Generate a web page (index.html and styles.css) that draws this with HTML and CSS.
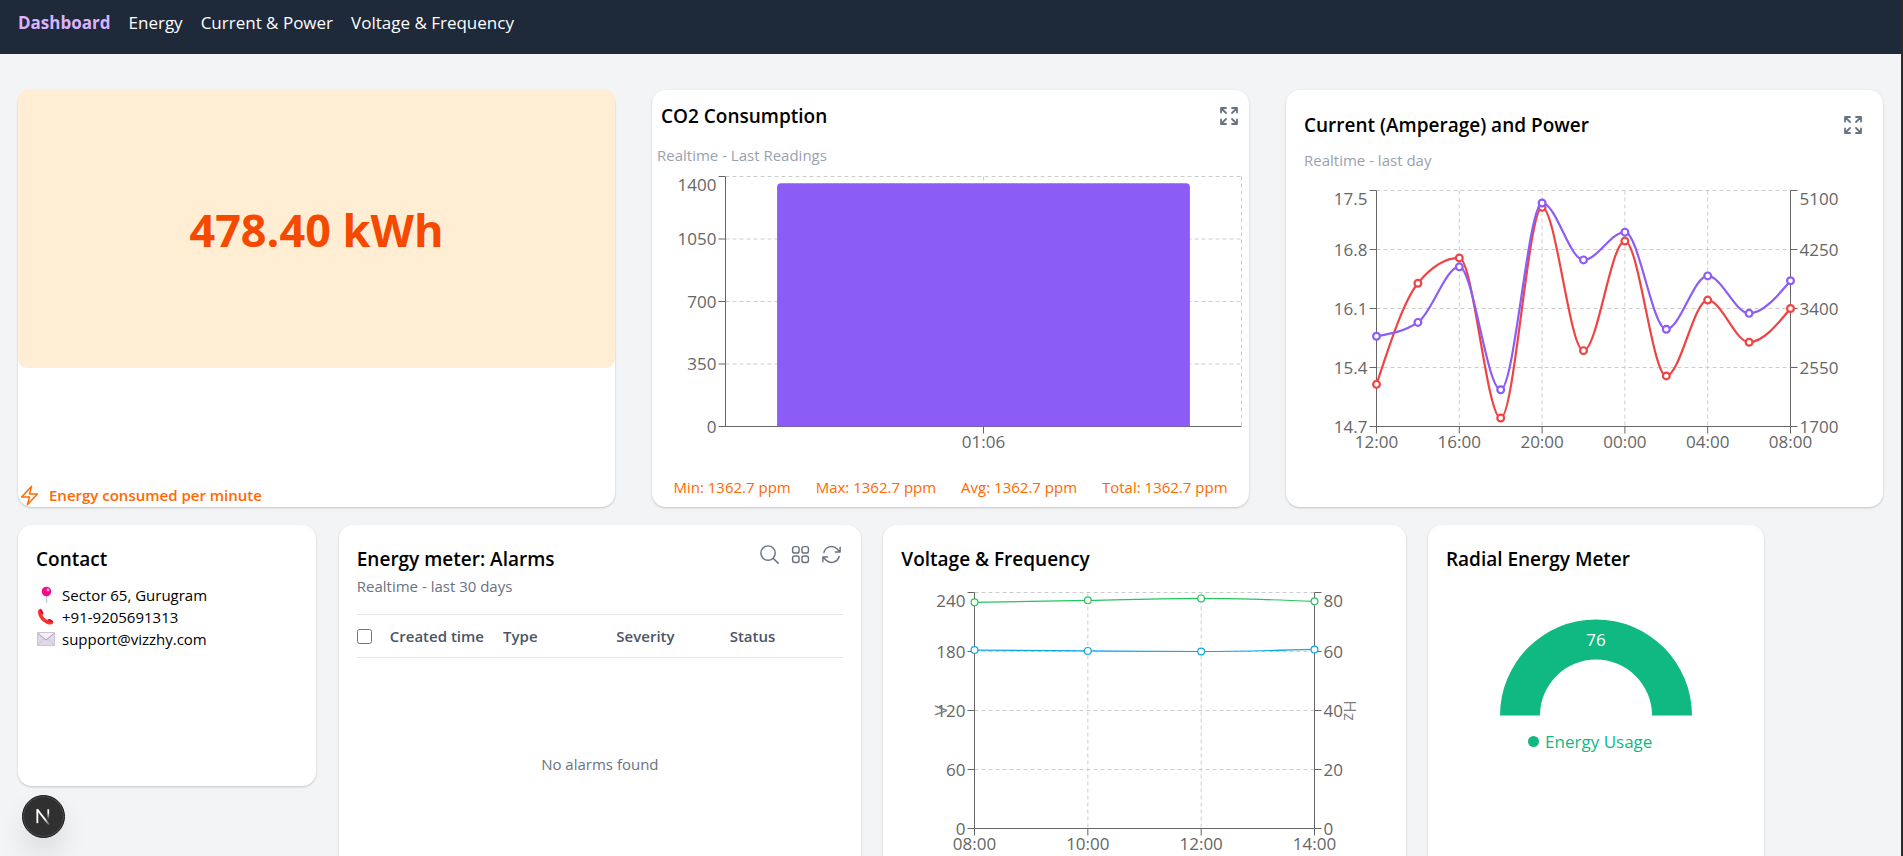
FILE: index.html
```html
<!DOCTYPE html>
<html lang="en">
<head>
<meta charset="utf-8">
<meta name="viewport" content="width=device-width, initial-scale=1">
<title>Energy Dashboard</title>
<link rel="stylesheet" href="styles.css">
</head>
<body>
<nav class="nav" aria-label="Main">
  <a class="nav-link active" href="#dashboard">Dashboard</a>
  <a class="nav-link" href="#energy">Energy</a>
  <a class="nav-link" href="#current-power">Current &amp; Power</a>
  <a class="nav-link" href="#voltage-frequency">Voltage &amp; Frequency</a>
</nav>

<main class="dashboard">
  <div class="row-top">
    <section class="card energy">
      <div class="energy-value">478.40 kWh</div>
      <div class="energy-note">
        <svg class="icon" viewBox="0 0 24 24" aria-hidden="true"><path d="M3.75 13.5l10.5-11.25L12 10.5h8.25L9.75 21.75 12 13.5H3.75z"/></svg>
        <span>Energy consumed per minute</span>
      </div>
    </section>

    <section class="card co2">
      <header class="card-head">
        <h2 class="title">CO2 Consumption</h2>
        <button class="icon-button" type="button" aria-label="Expand CO2 chart">
          <svg class="icon-expand" viewBox="0 0 18 18" aria-hidden="true"><path d="M1 5.500V1h5M1.500 1.500l4.500 4.500M12 1h5v4.500M16.500 1.500L12 6M1 12.500V17h5M1.500 16.500L6 12M17 12.500V17h-5M16.500 16.500L12 12"/></svg>
        </button>
      </header>
      <p class="subtitle">Realtime - Last Readings</p>
      <svg class="chart" id="co2-chart" role="img" aria-label="CO2 consumption bar chart"></svg>
      <div class="stats">
        <span>Min: 1362.7 ppm</span>
        <span>Max: 1362.7 ppm</span>
        <span>Avg: 1362.7 ppm</span>
        <span>Total: 1362.7 ppm</span>
      </div>
    </section>

    <section class="card current">
      <header class="card-head">
        <h2 class="title">Current (Amperage) and Power</h2>
        <button class="icon-button" type="button" aria-label="Expand current and power chart">
          <svg class="icon-expand" viewBox="0 0 18 18" aria-hidden="true"><path d="M1 5.500V1h5M1.500 1.500l4.500 4.500M12 1h5v4.500M16.500 1.500L12 6M1 12.500V17h5M1.500 16.500L6 12M17 12.500V17h-5M16.500 16.500L12 12"/></svg>
        </button>
      </header>
      <p class="subtitle">Realtime - last day</p>
      <svg class="chart" id="current-chart" role="img" aria-label="Current and power line chart"></svg>
    </section>
  </div>

  <div class="row-bottom">
    <section class="card contact">
      <h2 class="title">Contact</h2>
      <ul class="contact-list">
        <li>
          <svg class="emoji" viewBox="0 0 20 20" aria-hidden="true"><path d="M10.500 10v8" stroke="#c9c5cc" stroke-width="1.4"/><circle cx="10.500" cy="6.500" r="4.800" fill="#f70a8d"/><circle cx="12" cy="5" r="1.400" fill="#ffb4dc"/></svg>
          <span>Sector 65, Gurugram</span>
        </li>
        <li>
          <svg class="emoji" viewBox="0 0 20 20" aria-hidden="true"><path d="M3 2.500C4 1.500 5 1.500 5.600 2.500L7.300 5.500C7.700 6.400 7.200 7 6.400 7.700C7.200 10 9 11.900 11.500 13C12.400 12 13 11.600 13.900 12.100L16.800 14C17.800 14.800 17.600 16 16.500 16.800C15 18 12.500 17.800 9.500 16C5 13.300 2 9 2 5C2 4 2.300 3.100 3 2.500z" fill="#f8312f"/><path d="M4.600 1.800L7.300 5.500L6.400 7.700L4.300 4.200zM11.500 13l2.400-.9 3.300 2.500-1.200 1z" fill="#ca0b4a"/></svg>
          <span>+91-9205691313</span>
        </li>
        <li>
          <svg class="emoji" viewBox="0 0 20 20" aria-hidden="true"><path d="M1.500 3.500h17v13h-17z" fill="#e1d8ec"/><path d="M1.500 16.500l6.500-7M18.500 16.500l-6.500-7" stroke="#cdc4d6" stroke-width="1" fill="none"/><path d="M1.500 3.500L10 11l8.500-7.500z" fill="#f3eef8"/><path d="M1.500 4L10 11l8.500-7" stroke="#998ea4" stroke-width=".8" fill="none"/><path d="M1.500 3.500h17v13h-17z" stroke="#c3bacb" stroke-width=".8" fill="none"/></svg>
          <span>support@vizzhy.com</span>
        </li>
      </ul>
    </section>

    <section class="card alarms">
      <header class="alarms-head">
        <div>
          <h2 class="title">Energy meter: Alarms</h2>
          <p class="alarms-sub">Realtime - last 30 days</p>
        </div>
        <div class="tools">
          <button class="icon-button" type="button" aria-label="Search"><svg class="icon" viewBox="0 0 24 24" aria-hidden="true"><path d="m21 21-5.197-5.197m0 0A7.500 7.500 0 1 0 5.196 5.196a7.500 7.500 0 0 0 10.607 10.607Z"/></svg></button>
          <button class="icon-button" type="button" aria-label="Grid view"><svg class="icon" viewBox="0 0 24 24" aria-hidden="true"><rect x="3.750" y="3.750" width="6.750" height="6.750" rx="2.250"/><rect x="13.500" y="3.750" width="6.750" height="6.750" rx="2.250"/><rect x="3.750" y="13.500" width="6.750" height="6.750" rx="2.250"/><rect x="13.500" y="13.500" width="6.750" height="6.750" rx="2.250"/></svg></button>
          <button class="icon-button" type="button" aria-label="Refresh"><svg class="icon" viewBox="0 0 24 24" aria-hidden="true"><path d="M16.023 9.348h4.992v-.001M2.985 19.644v-4.992m0 0h4.992m-4.993 0 3.181 3.183a8.250 8.250 0 0 0 13.803-3.700M4.031 9.865a8.250 8.250 0 0 1 13.803-3.700l3.181 3.182m0-4.991v4.990"/></svg></button>
        </div>
      </header>
      <table class="alarm-table">
        <thead>
          <tr>
            <th class="check-cell"><input class="check" type="checkbox" aria-label="Select all alarms"></th>
            <th>Created time</th>
            <th>Type</th>
            <th>Severity</th>
            <th>Status</th>
          </tr>
        </thead>
        <tbody>
          <tr><td class="empty" colspan="5">No alarms found</td></tr>
        </tbody>
      </table>
    </section>

    <section class="card voltage">
      <h2 class="title">Voltage &amp; Frequency</h2>
      <svg class="chart" id="voltage-chart" role="img" aria-label="Voltage and frequency line chart"></svg>
    </section>

    <section class="card radial">
      <h2 class="title">Radial Energy Meter</h2>
      <svg class="gauge" viewBox="0 0 194 97" role="img" aria-label="Energy usage 76">
        <path d="M1 96.500A96 96 0 0 1 193 96.500H153A56 56 0 0 0 41 96.500z" fill="#10b981"/>
        <text class="gauge-value" x="97" y="27">76</text>
      </svg>
      <p class="legend"><span class="legend-dot"></span>Energy Usage</p>
    </section>
  </div>
</main>

<button class="dev-button" type="button" aria-label="Open developer tools">
  <svg class="dev-logo" viewBox="0 0 40 40" aria-hidden="true">
    <defs>
      <linearGradient id="fade-stem" x1="0" y1="0" x2="0" y2="1"><stop offset=".3" stop-color="#fff"/><stop offset="1" stop-color="#fff" stop-opacity="0"/></linearGradient>
      <linearGradient id="fade-diagonal" gradientUnits="userSpaceOnUse" x1="14" y1="14" x2="26" y2="29"><stop offset=".6" stop-color="#fff"/><stop offset="1" stop-color="#fff" stop-opacity="0"/></linearGradient>
    </defs>
    <path d="M14 26.500V13" stroke="#fff" stroke-width="1.800"/>
    <path d="M13.800 13L25.500 28" stroke="url(#fade-diagonal)" stroke-width="1.800"/>
    <rect x="23.800" y="13" width="1.700" height="10" fill="url(#fade-stem)"/>
  </svg>
</button>
<script src="charts.js"></script>
</body>
</html>
```

FILE: styles.css
```css
* {
  box-sizing: border-box;
}

html {
  background: #f3f4f6;
}

body {
  margin: 0;
  min-height: 100vh;
  border-right: 2px solid #2b2b2b;
  background: #f3f4f6;
  color: #000;
  font-family: "Open Sans", "Noto Sans", sans-serif;
  font-size: 17px;
  line-height: 27px;
}

h2,
p,
ul {
  margin: 0;
}

.nav {
  display: flex;
  gap: 18px;
  padding: 9px 18px 18px;
  background: #1e2939;
}

.nav-link {
  color: #fff;
  text-decoration: none;
}

.nav-link.active {
  color: #dab2ff;
  font-weight: 700;
}

.dashboard {
  padding: 36px 18px;
}

.row-top {
  display: grid;
  grid-template-columns: repeat(3, minmax(0, 1fr));
  gap: 37px;
}

.row-bottom {
  display: grid;
  grid-template-columns: 16% 28% 28% 18%;
  column-gap: 1.2%;
  align-items: start;
  margin-top: 18px;
}

.card {
  border-radius: 14px;
  background: #fff;
  box-shadow: 0 1px 3px rgba(0, 0, 0, 0.1), 0 1px 2px rgba(0, 0, 0, 0.1);
}

.title {
  font-size: 19px;
  font-weight: 600;
  line-height: 32px;
}

.icon,
.icon-expand {
  display: block;
  fill: none;
  stroke: currentColor;
  stroke-width: 1.5;
  stroke-linecap: round;
  stroke-linejoin: round;
}

.icon {
  width: 23px;
  height: 23px;
}

.icon-expand {
  width: 18px;
  height: 18px;
  stroke-width: 1.8;
}

.icon-button {
  padding: 0;
  border: 0;
  background: none;
  color: #6a7282;
  cursor: pointer;
}

.card-head {
  display: flex;
  align-items: center;
  justify-content: space-between;
}

.subtitle {
  color: #99a1af;
  font-size: 15px;
  line-height: 22px;
}

.chart {
  display: block;
  width: 100%;
}

/* Energy total */

.energy {
  display: flex;
  flex-direction: column;
  justify-content: space-between;
}

.energy-value {
  display: flex;
  align-items: center;
  justify-content: center;
  height: 278px;
  border-radius: 9px;
  background: #ffedd4;
  color: #f54900;
  font-size: 45px;
  font-weight: 700;
}

.energy-note {
  display: flex;
  align-items: center;
  gap: 8px;
  height: 23px;
  color: #ff6900;
  font-size: 15px;
  font-weight: 600;
}

/* CO2 */

.co2 .card-head {
  padding: 10px 11px 8px 9px;
}

.co2 .subtitle {
  padding: 4px 5px 5px;
}

.co2 .chart {
  height: 303px;
}

.stats {
  display: flex;
  justify-content: space-around;
  padding: 0 9px 6px;
  color: #ff6900;
  font-size: 15px;
}

/* Current and power */

.current {
  padding: 18px;
}

.current .card-head {
  padding: 1px 3px 0 0;
}

.current .subtitle {
  padding-top: 8px;
}

.current .chart {
  height: 290px;
  margin-top: 14px;
}

/* Contact */

.contact {
  min-height: 261px;
  padding: 18px;
}

.contact-list {
  padding: 9px 0 0;
  list-style: none;
  font-size: 15px;
  line-height: 22px;
}

.contact-list li {
  display: flex;
  align-items: center;
  gap: 6px;
}

.emoji {
  width: 20px;
  height: 20px;
}

/* Alarms */

.alarms,
.voltage,
.radial {
  min-height: 380px;
  padding: 18px;
}

.alarms-head {
  display: flex;
  justify-content: space-between;
  padding-bottom: 17px;
}

.alarms-sub {
  color: #6a7282;
  font-size: 15px;
  line-height: 22px;
}

.tools {
  display: flex;
  align-items: flex-start;
  gap: 8px;
}

.alarm-table {
  width: 100%;
  border-collapse: collapse;
  table-layout: fixed;
  font-size: 15px;
}

.alarm-table th {
  height: 43px;
  padding: 0;
  border-top: 1px solid #e5e7eb;
  border-bottom: 1px solid #e5e7eb;
  color: #4a5565;
  font-weight: 600;
  text-align: left;
}

.alarm-table .check-cell {
  width: 33px;
}

.check {
  display: block;
  width: 15px;
  height: 15px;
  margin: 0;
}

.empty {
  height: 214px;
  padding: 0;
  color: #6a7282;
  text-align: center;
}

/* Voltage and frequency */

.voltage .chart {
  height: 300px;
  margin-top: 8px;
}

/* Radial meter */

.radial {
  display: flex;
  flex-direction: column;
}

.gauge {
  align-self: center;
  width: 194px;
  margin-top: 44px;
}

.gauge-value {
  fill: #fff;
  font-size: 17px;
  text-anchor: middle;
}

.legend {
  display: flex;
  align-items: center;
  justify-content: center;
  gap: 6px;
  margin-top: 12px;
  padding-right: 11px;
  color: #10b981;
}

.legend-dot {
  width: 11px;
  height: 11px;
  border-radius: 50%;
  background: #10b981;
}

/* Chart parts */

.grid-line {
  stroke: #ccc;
  stroke-dasharray: 4 3;
}

.axis-line {
  stroke: #666;
}

.tick-label {
  fill: #666;
  font-size: 17px;
}

.axis-title {
  fill: #808080;
  font-size: 17px;
}

/* Floating button */

.dev-button {
  position: fixed;
  bottom: 18px;
  left: 22px;
  width: 43px;
  height: 43px;
  padding: 0;
  border: 1px solid #171717;
  border-radius: 50%;
  background: #303030;
  box-shadow: inset 0 0 0 1px #4d4d4d, 0 16px 32px -8px rgba(0, 0, 0, 0.24);
}

.dev-logo {
  display: block;
  width: 41px;
  height: 41px;
  fill: none;
}
```

FILE: charts.js
```js
(function () {
  var NS = "http://www.w3.org/2000/svg";

  function add(svg, name, attrs, text) {
    var node = document.createElementNS(NS, name);
    Object.keys(attrs).forEach(function (key) {
      node.setAttribute(key, attrs[key]);
    });
    if (text !== undefined) node.textContent = text;
    svg.appendChild(node);
    return node;
  }

  function line(svg, cls, x1, y1, x2, y2) {
    add(svg, "line", { class: cls, x1: x1, y1: y1, x2: x2, y2: y2 });
  }

  // Monotone cubic interpolation through evenly spaced points.
  function monotonePath(pts) {
    var n = pts.length;
    var h = pts[1][0] - pts[0][0];
    var s = [];
    var t = [];
    var i;
    for (i = 0; i < n - 1; i++) s.push((pts[i + 1][1] - pts[i][1]) / h);
    for (i = 1; i < n - 1; i++) {
      var a = s[i - 1];
      var b = s[i];
      t[i] = (Math.sign(a) + Math.sign(b)) *
        Math.min(Math.abs(a), Math.abs(b), Math.abs(a + b) / 4);
    }
    t[0] = (3 * s[0] - t[1]) / 2;
    t[n - 1] = (3 * s[n - 2] - t[n - 2]) / 2;
    var d = "M" + pts[0].join(",");
    for (i = 0; i < n - 1; i++) {
      d += "C" + [
        pts[i][0] + h / 3, pts[i][1] + t[i] * h / 3,
        pts[i + 1][0] - h / 3, pts[i + 1][1] - t[i + 1] * h / 3,
        pts[i + 1][0], pts[i + 1][1]
      ].join(",");
    }
    return d;
  }

  function draw(id, cfg) {
    var svg = document.getElementById(id);
    var width = Math.round(svg.getBoundingClientRect().width);
    var left = cfg.left + 0.5;
    var right = width - cfg.right + 0.5;
    var top = cfg.top + 0.5;
    var bottom = top + cfg.height;
    svg.textContent = "";

    cfg.leftTicks.forEach(function (label, i) {
      var y = bottom - cfg.height * i / (cfg.leftTicks.length - 1);
      var textY = Math.max(y, top + cfg.topShift) + 6;
      line(svg, "grid-line", left, y, right, y);
      line(svg, "axis-line", left - 7, y, left, y);
      add(svg, "text", { class: "tick-label", x: left - 9, y: textY, "text-anchor": "end" }, label);
      if (cfg.rightTicks) {
        line(svg, "axis-line", right, y, right + 7, y);
        add(svg, "text", { class: "tick-label", x: right + 9, y: textY }, cfg.rightTicks[i]);
      }
    });

    cfg.xTicks.forEach(function (label, i) {
      var x = cfg.bar ? (left + right) / 2 : left + (right - left) * i / (cfg.xTicks.length - 1);
      line(svg, "grid-line", x, top, x, bottom);
      line(svg, "axis-line", x, bottom, x, bottom + 7);
      add(svg, "text", { class: "tick-label", x: x, y: bottom + 21, "text-anchor": "middle" }, label);
    });
    line(svg, "grid-line", right, top, right, bottom);

    line(svg, "axis-line", left, top, left, bottom);
    line(svg, "axis-line", left, bottom, right, bottom);
    if (cfg.rightTicks) line(svg, "axis-line", right, top, right, bottom);

    if (cfg.bar) {
      var w = (right - left) * 0.8;
      var x0 = left + (right - left) * 0.1;
      var y0 = bottom - cfg.height * cfg.bar.value / cfg.bar.max;
      add(svg, "path", {
        fill: cfg.bar.color,
        d: "M" + x0 + "," + bottom + "V" + (y0 + 4) + "q0,-4 4,-4h" + (w - 8) + "q4,0 4,4V" + bottom + "z"
      });
    }

    (cfg.series || []).forEach(function (series) {
      var pts = series.values.map(function (v, i) {
        return [
          left + (right - left) * i / (series.values.length - 1),
          bottom - cfg.height * (v - series.min) / (series.max - series.min)
        ];
      });
      add(svg, "path", { d: monotonePath(pts), fill: "none", stroke: series.color, "stroke-width": cfg.stroke });
      pts.forEach(function (p) {
        add(svg, "circle", { cx: p[0], cy: p[1], r: 3.4, fill: "#fff", stroke: series.color, "stroke-width": cfg.stroke });
      });
    });

    if (cfg.titles) {
      var mid = (top + bottom) / 2;
      var lx = left - 28;
      var rx = right + 29;
      add(svg, "text", { class: "axis-title", x: lx, y: mid, "text-anchor": "middle", transform: "rotate(-90 " + lx + " " + mid + ")" }, cfg.titles[0]);
      add(svg, "text", { class: "axis-title", x: rx, y: mid, "text-anchor": "middle", transform: "rotate(90 " + rx + " " + mid + ")" }, cfg.titles[1]);
    }
  }

  function drawAll() {
    draw("co2-chart", {
      left: 73, right: 8, top: 5, height: 250, topShift: 8,
      leftTicks: ["0", "350", "700", "1050", "1400"],
      xTicks: ["01:06"],
      bar: { value: 1362.7, max: 1400, color: "#8b5cf6" }
    });
    draw("current-chart", {
      left: 72, right: 75, top: 5, height: 236, topShift: 8, stroke: 2.2,
      leftTicks: ["14.7", "15.4", "16.1", "16.8", "17.5"],
      rightTicks: ["1700", "2550", "3400", "4250", "5100"],
      xTicks: ["12:00", "16:00", "20:00", "00:00", "04:00", "08:00"],
      series: [
        { color: "#ef4444", min: 14.7, max: 17.5, values: [15.2, 16.4, 16.7, 14.8, 17.3, 15.6, 16.9, 15.3, 16.2, 15.7, 16.1] },
        { color: "#8b5cf6", min: 1700, max: 5100, values: [3000, 3200, 4000, 2230, 4920, 4100, 4500, 3100, 3870, 3330, 3800] }
      ]
    });
    draw("voltage-chart", {
      left: 73, right: 73, top: 9, height: 236, topShift: 8, stroke: 1.2,
      leftTicks: ["0", "60", "120", "180", "240"],
      rightTicks: ["0", "20", "40", "60", "80"],
      xTicks: ["08:00", "10:00", "12:00", "14:00"],
      titles: ["V", "Hz"],
      series: [
        { color: "#22c55e", min: 0, max: 240, values: [230, 232, 234, 231] },
        { color: "#0ea5e9", min: 0, max: 80, values: [60.5, 60.2, 60, 60.7] }
      ]
    });
  }

  drawAll();
  window.addEventListener("resize", drawAll);
})();
```
